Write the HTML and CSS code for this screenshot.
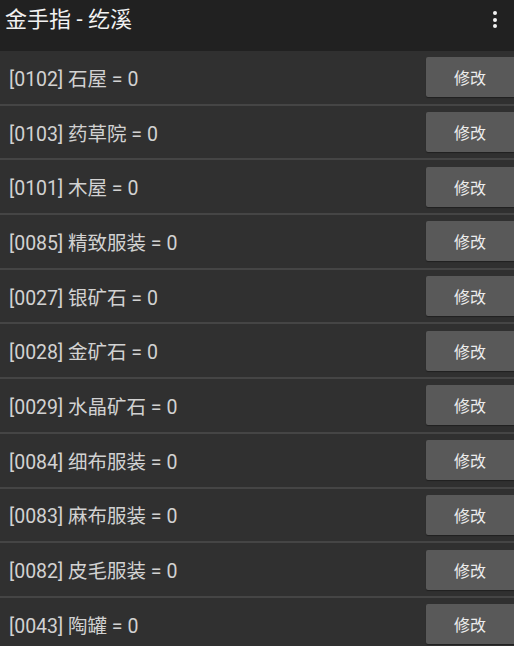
FILE: index.html
```html
<!DOCTYPE html>
<html lang="zh">
<head>
<meta charset="utf-8">
<title>金手指 - 纥溪</title>
<link rel="stylesheet" href="styles.css">
</head>
<body>
<header class="appbar">
  <h1 class="title">金手指 - 纥溪</h1>
  <div class="menu" aria-label="更多">
    <span class="dot"></span><span class="dot"></span><span class="dot"></span>
  </div>
</header>
<ul class="list">
  <li class="row"><span class="label">[0102] 石屋 = 0</span><button class="btn">修改</button></li>
  <li class="row"><span class="label">[0103] 药草院 = 0</span><button class="btn">修改</button></li>
  <li class="row"><span class="label">[0101] 木屋 = 0</span><button class="btn">修改</button></li>
  <li class="row"><span class="label">[0085] 精致服装 = 0</span><button class="btn">修改</button></li>
  <li class="row"><span class="label">[0027] 银矿石 = 0</span><button class="btn">修改</button></li>
  <li class="row"><span class="label">[0028] 金矿石 = 0</span><button class="btn">修改</button></li>
  <li class="row"><span class="label">[0029] 水晶矿石 = 0</span><button class="btn">修改</button></li>
  <li class="row"><span class="label">[0084] 细布服装 = 0</span><button class="btn">修改</button></li>
  <li class="row"><span class="label">[0083] 麻布服装 = 0</span><button class="btn">修改</button></li>
  <li class="row"><span class="label">[0082] 皮毛服装 = 0</span><button class="btn">修改</button></li>
  <li class="row"><span class="label">[0043] 陶罐 = 0</span><button class="btn">修改</button></li>
</ul>
</body>
</html>
```
FILE: styles.css
```css
html, body {
  margin: 0;
  padding: 0;
  background: #303030;
  overflow: hidden;
}
body {
  font-family: Roboto, "Noto Sans CJK SC", sans-serif;
  width: 514px;
  height: 646px;
}
.appbar {
  height: 51px;
  background: #212121;
  display: flex;
  align-items: center;
  justify-content: space-between;
  padding: 0 0 0 5px;
  box-sizing: border-box;
}
.title {
  margin: 0;
  font-size: 22px;
  font-weight: 400;
  color: #f2f2f2;
  line-height: 1;
  margin-top: -12px;
}
.menu {
  width: 24px;
  height: 51px;
  display: flex;
  flex-direction: column;
  align-items: center;
  justify-content: flex-start;
  padding-top: 11px;
  box-sizing: border-box;
  gap: 2.5px;
  margin-right: 7px;
}
.dot {
  width: 4px;
  height: 4px;
  border-radius: 50%;
  background: #f2f2f2;
}
.list {
  list-style: none;
  margin: 0;
  padding: 0;
}
.row {
  height: 52.7px;
  border-bottom: 2px solid #454545;
  display: flex;
  align-items: center;
  justify-content: space-between;
  padding-left: 9px;
}
.label {
  font-size: 19.5px;
  color: #d2d2d2;
}
.btn {
  width: 88px;
  height: 40px;
  border: none;
  border-radius: 2px 0 0 2px;
  background: #595959;
  color: #ececec;
  font-family: Roboto, "Noto Sans CJK SC", sans-serif;
  font-size: 16px;
  padding: 0;
  margin: 0;
  box-shadow: 0 1px 1px rgba(0, 0, 0, 0.35);
}
```
